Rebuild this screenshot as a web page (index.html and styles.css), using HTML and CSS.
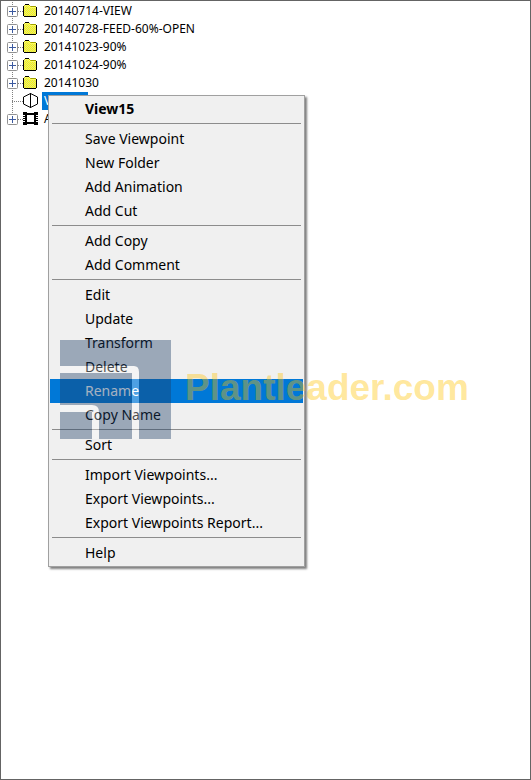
FILE: index.html
```html
<!DOCTYPE html>
<html lang="en">
<head>
    <meta charset="UTF-8">
    <meta name="viewport" content="width=device-width, initial-scale=1.0">
    <title>Saved Viewpoints</title>
    <link rel="stylesheet" href="styles.css">
</head>
<body>
    <!-- Shared icon shapes -->
    <svg class="defs" width="0" height="0" aria-hidden="true">
        <defs>
            <pattern id="dither" width="2" height="2" patternUnits="userSpaceOnUse">
                <rect width="2" height="2" fill="#ffff00"/>
                <rect width="1" height="1" fill="#dcdc90"/>
                <rect x="1" y="1" width="1" height="1" fill="#dcdc90"/>
            </pattern>
            <symbol id="folder" viewBox="0 0 16 16">
                <path d="M2 4L4 2H7L9 4H14V13H2Z" fill="url(#dither)" shape-rendering="crispEdges"/>
                <path d="M1.5 12V3.500M2 2.500H3M7 2.500H8M8 3.500H14" fill="none" stroke="#a0a000"/>
                <path d="M2 13.500H14M14.500 4V13M3 1.500H7M1 3.500H2M1.500 4V13" fill="none" stroke="#000"/>
                <path d="M2 3.500H3V2.500H7V3.500H8V4.500H14" fill="none" stroke="#ffff60"/>
            </symbol>
            <symbol id="expand" viewBox="0 0 11 11">
                <rect x=".5" y=".5" width="10" height="10" rx="1" fill="#fff" stroke="#919191"/>
                <path d="M2 5.500H9M5.500 2V9" stroke="#3c5aa0" fill="none"/>
            </symbol>
        </defs>
    </svg>

    <main class="panel">
        <ul class="tree">
            <li class="node"><svg class="expand"><use href="#expand"/></svg><svg class="icon"><use href="#folder"/></svg><span class="name">20140714-VIEW</span></li>
            <li class="node"><svg class="expand"><use href="#expand"/></svg><svg class="icon"><use href="#folder"/></svg><span class="name">20140728-FEED-60%-OPEN</span></li>
            <li class="node"><svg class="expand"><use href="#expand"/></svg><svg class="icon"><use href="#folder"/></svg><span class="name">20141023-90%</span></li>
            <li class="node"><svg class="expand"><use href="#expand"/></svg><svg class="icon"><use href="#folder"/></svg><span class="name">20141024-90%</span></li>
            <li class="node"><svg class="expand"><use href="#expand"/></svg><svg class="icon"><use href="#folder"/></svg><span class="name">20141030</span></li>
            <li class="node">
                <span class="expand"></span>
                <svg class="icon" viewBox="0 0 16 16"><path d="M8.500 0V15M8.500 .5L1.500 4V11L8.500 14.500L15.500 11V4Z" fill="none" stroke="#000"/></svg>
                <span class="name selected">View</span>
            </li>
            <li class="node">
                <svg class="expand"><use href="#expand"/></svg>
                <svg class="icon" viewBox="0 0 16 16"><path d="M1 3H16M1 12H16" stroke="#000" stroke-width="2"/><path d="M4 1V14M13 1V14" stroke="#000" stroke-width="2"/><path d="M2 1V14M15 1V14" stroke="#000" stroke-width="2" stroke-dasharray="1 1"/></svg>
                <span class="name">A</span>
            </li>
        </ul>

        <menu class="context-menu">
            <li><button class="item title">View15</button></li>
            <li class="separator"></li>
            <li><button class="item">Save Viewpoint</button></li>
            <li><button class="item">New Folder</button></li>
            <li><button class="item">Add Animation</button></li>
            <li><button class="item">Add Cut</button></li>
            <li class="separator"></li>
            <li><button class="item">Add Copy</button></li>
            <li><button class="item">Add Comment</button></li>
            <li class="separator"></li>
            <li><button class="item">Edit</button></li>
            <li><button class="item">Update</button></li>
            <li><button class="item">Transform</button></li>
            <li><button class="item">Delete</button></li>
            <li><button class="item active">Rename</button></li>
            <li><button class="item">Copy Name</button></li>
            <li class="separator"></li>
            <li><button class="item">Sort</button></li>
            <li class="separator"></li>
            <li><button class="item">Import Viewpoints...</button></li>
            <li><button class="item">Export Viewpoints...</button></li>
            <li><button class="item">Export Viewpoints Report...</button></li>
            <li class="separator"></li>
            <li><button class="item">Help</button></li>
        </menu>

        <div class="watermark">
            <svg class="logo" width="111" height="99" viewBox="0 0 111 99" aria-hidden="true">
                <path d="M0 26H74Q79 26 79 32V99H72V33H0ZM0 65H32Q39 65 39 72V99H32V72H0Z" fill="#fff" fill-opacity=".3"/>
                <path d="M0 0H111V99H79V32Q79 26 74 26H0ZM0 33H72V99H39V72Q39 65 32 65H0ZM0 72H32V99H0Z" fill="#1c3c64" fill-opacity=".4"/>
            </svg>
            <span class="brand">Plantleader.com</span>
        </div>
    </main>
</body>
</html>
```

FILE: styles.css
```css
* {
    box-sizing: border-box;
}

body {
    margin: 0;
    background: #fff;
    color: #000;
    font-family: "Noto Sans", "Open Sans", sans-serif;
}

.defs {
    position: absolute;
}

.panel {
    position: relative;
    min-height: 100vh;
    padding: 1px 6px;
    border: 1px solid #646464;
}

/* Tree */
.tree {
    margin: 0;
    padding: 0;
    list-style: none;
    font-size: 12px;
    background: repeating-linear-gradient(#808080 0 1px, transparent 1px 2px) 5px 0 / 1px 116px no-repeat;
}

.node {
    display: flex;
    align-items: center;
    height: 18px;
    background: repeating-linear-gradient(90deg, #808080 0 1px, transparent 1px 2px) 5px 9px / 11px 1px no-repeat;
}

.expand {
    width: 11px;
    height: 11px;
    margin-right: 4px;
}

.icon {
    width: 16px;
    height: 16px;
    margin-right: 4px;
}

.name {
    padding: 0 2px;
    line-height: 18px;
}

.selected {
    min-width: 46px;
    background: #0078d7;
    color: #fff;
}

/* Context menu */
.context-menu {
    position: absolute;
    top: 94px;
    left: 47px;
    min-width: 257px;
    margin: 0;
    padding: 1px;
    list-style: none;
    background: #f0f0f0;
    border: 1px solid #a0a0a0;
    box-shadow: 2px 2px 2px rgba(0, 0, 0, 0.5);
}

.item {
    display: block;
    width: 100%;
    height: 24px;
    padding: 0 35px;
    border: 0;
    background: none;
    color: #000;
    font-family: inherit;
    font-size: 14px;
    line-height: 24px;
    text-align: left;
    white-space: nowrap;
}

.title {
    font-weight: bold;
}

.active {
    background: #0078d7;
    color: #fff;
}

.separator {
    height: 6px;
    padding: 2px 2px 0;
}

.separator::before {
    content: "";
    display: block;
    border-top: 1px solid #8c8c8c;
}

/* Watermark over the menu */
.watermark {
    position: absolute;
    top: 339px;
    left: 59px;
    display: flex;
    align-items: center;
    gap: 14px;
    pointer-events: none;
}

.brand {
    padding-bottom: 4px;
    color: rgba(255, 194, 0, 0.4);
    font-family: "Liberation Sans", Arial, sans-serif;
    font-size: 37px;
    font-weight: bold;
    line-height: 40px;
}
```
